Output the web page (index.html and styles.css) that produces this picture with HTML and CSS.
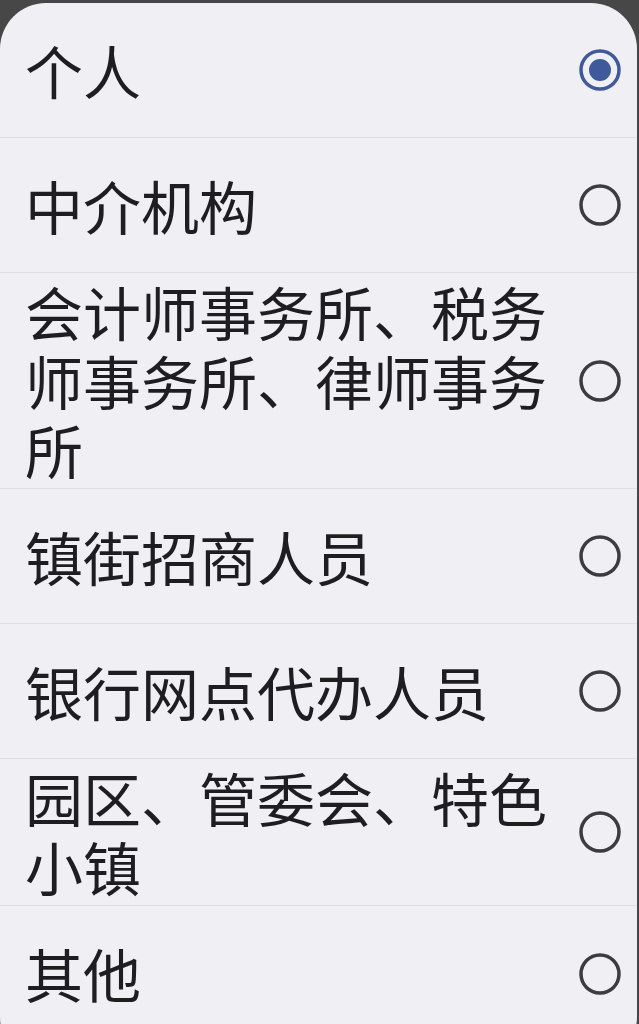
FILE: index.html
```html
<!DOCTYPE html>
<html lang="zh-CN">
  <head>
    <meta charset="UTF-8" />
    <meta name="viewport" content="width=device-width, initial-scale=1.0" />
    <title>身份选择</title>
    <link rel="stylesheet" href="styles.css">
  </head>
  <body>
    <div class="sheet">
      <div class="row">
        <span class="label">个人</span>
        <svg class="radio" viewBox="0 0 42 42"><circle cx="21" cy="21" r="19" class="ring on" /><circle cx="21" cy="21" r="11" class="dot" /></svg>
      </div>
      <div class="row">
        <span class="label">中介机构</span>
        <svg class="radio" viewBox="0 0 42 42"><circle cx="21" cy="21" r="19" class="ring" /></svg>
      </div>
      <div class="row">
        <span class="label">会计师事务所、税务师事务所、律师事务所</span>
        <svg class="radio" viewBox="0 0 42 42"><circle cx="21" cy="21" r="19" class="ring" /></svg>
      </div>
      <div class="row">
        <span class="label">镇街招商人员</span>
        <svg class="radio" viewBox="0 0 42 42"><circle cx="21" cy="21" r="19" class="ring" /></svg>
      </div>
      <div class="row">
        <span class="label">银行网点代办人员</span>
        <svg class="radio" viewBox="0 0 42 42"><circle cx="21" cy="21" r="19" class="ring" /></svg>
      </div>
      <div class="row">
        <span class="label">园区、管委会、特色小镇</span>
        <svg class="radio" viewBox="0 0 42 42"><circle cx="21" cy="21" r="19" class="ring" /></svg>
      </div>
      <div class="row last">
        <span class="label">其他</span>
        <svg class="radio" viewBox="0 0 42 42"><circle cx="21" cy="21" r="19" class="ring" /></svg>
      </div>
    </div>
  </body>
</html>
```
FILE: styles.css
```css
html,
body {
  margin: 0;
  padding: 0;
  background: #474747;
  height: 1024px;
  overflow: hidden;
}
.sheet {
  margin-top: 3px;
  width: 637px;
  background: #f0eff4;
  border-radius: 46px;
  font-family: "Noto Sans CJK SC", "Noto Sans", sans-serif;
  color: #1e1e20;
  min-height: 1060px;
}
.row {
  display: flex;
  align-items: center;
  min-height: 135px;
  box-sizing: border-box;
  padding: 4px 16px 4px 25px;
  border-bottom: 1px solid #dfdee3;
}
.row.last {
  border-bottom: none;
}
.label {
  flex: 1;
  margin-right: 18px;
  font-size: 58px;
  line-height: 69px;
}
.radio {
  width: 42px;
  height: 42px;
  flex-shrink: 0;
}
.ring {
  fill: none;
  stroke: #3c3c3f;
  stroke-width: 3.5;
}
.ring.on {
  stroke: #3f5a9a;
}
.dot {
  fill: #3f5a9a;
}
```
